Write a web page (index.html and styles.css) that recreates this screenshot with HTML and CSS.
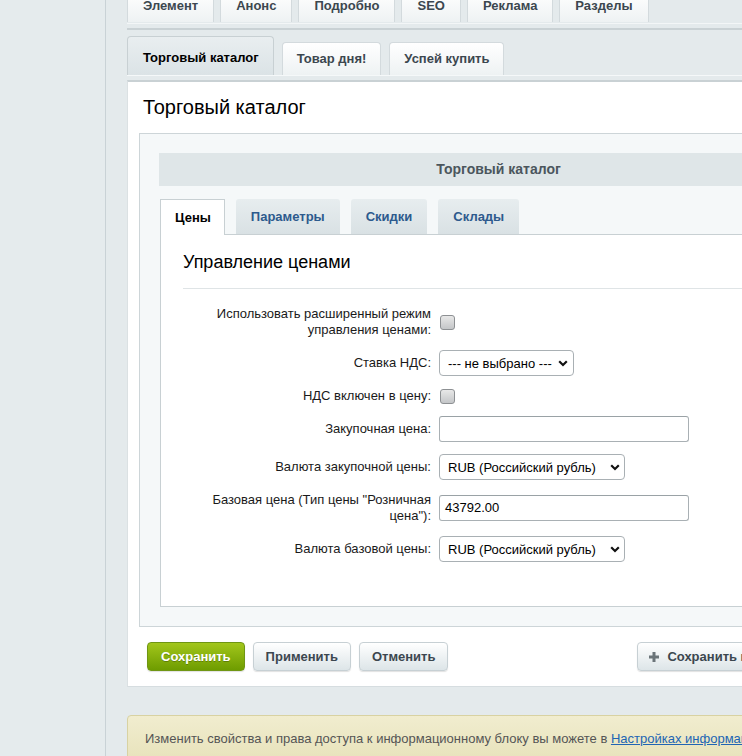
FILE: index.html
```html
<!DOCTYPE html>
<html lang="ru">
<head>
<meta charset="utf-8">
<title>Торговый каталог</title>
<link rel="stylesheet" href="styles.css">
</head>
<body>
<div class="page">
  <div class="side"></div>
  <div class="main">
    <div class="tabs1">
      <div class="tab1">Элемент</div>
      <div class="tab1">Анонс</div>
      <div class="tab1">Подробно</div>
      <div class="tab1">SEO</div>
      <div class="tab1">Реклама</div>
      <div class="tab1">Разделы</div>
    </div>
    <div class="tabs2">
      <div class="tab2 active">Торговый каталог</div>
      <div class="tab2">Товар дня!</div>
      <div class="tab2">Успей купить</div>
    </div>
    <div class="card">
      <h1 class="card-title">Торговый каталог</h1>
      <div class="inner">
        <div class="inner-head">Торговый каталог</div>
        <div class="subtabs">
          <div class="subtab active">Цены</div>
          <div class="subtab">Параметры</div>
          <div class="subtab">Скидки</div>
          <div class="subtab">Склады</div>
        </div>
        <div class="panel">
          <h2 class="panel-title">Управление ценами</h2>
          <div class="sep"></div>
          <div class="form">
            <div class="lbl">Использовать расширенный режим управления ценами:</div>
            <div class="ctl"><span class="cb"></span></div>

            <div class="lbl">Ставка НДС:</div>
            <div class="ctl"><div class="sel sel-sm"><span>--- не выбрано ---</span><svg class="chev" width="10" height="7" viewBox="0 0 10 7"><path d="M1.2 1.3 L5 5 L8.8 1.3" fill="none" stroke="#111" stroke-width="2.2"/></svg></div></div>

            <div class="lbl">НДС включен в цену:</div>
            <div class="ctl"><span class="cb"></span></div>

            <div class="lbl">Закупочная цена:</div>
            <div class="ctl"><div class="inp"></div></div>

            <div class="lbl">Валюта закупочной цены:</div>
            <div class="ctl"><div class="sel"><span>RUB (Российский рубль)</span><svg class="chev" width="10" height="7" viewBox="0 0 10 7"><path d="M1.2 1.3 L5 5 L8.8 1.3" fill="none" stroke="#111" stroke-width="2.2"/></svg></div></div>

            <div class="lbl">Базовая цена (Тип цены "Розничная цена"):</div>
            <div class="ctl"><div class="inp">43792.00</div></div>

            <div class="lbl">Валюта базовой цены:</div>
            <div class="ctl"><div class="sel"><span>RUB (Российский рубль)</span><svg class="chev" width="10" height="7" viewBox="0 0 10 7"><path d="M1.2 1.3 L5 5 L8.8 1.3" fill="none" stroke="#111" stroke-width="2.2"/></svg></div></div>
          </div>
        </div>
      </div>
      <div class="buttons">
        <div class="btn btn-green">Сохранить</div>
        <div class="btn">Применить</div>
        <div class="btn">Отменить</div>
        <div class="btn btn-add"><svg width="12" height="12" viewBox="0 0 12 12"><path d="M6 1 V11 M1 6 H11" stroke="#6b7479" stroke-width="3"/></svg>Сохранить и добавить</div>
      </div>
    </div>
    <div class="note">Изменить свойства и права доступа к информационному блоку вы можете в <a href="#">Настройках информационного блока</a>.</div>
  </div>
</div>
</body>
</html>
```

FILE: styles.css
```css
html, body {
  margin: 0;
  padding: 0;
}
body {
  width: 742px;
  height: 756px;
  overflow: hidden;
  background: #e4eaec;
  font-family: "Liberation Sans", Arial, sans-serif;
  font-size: 13px;
  color: #000;
}
.page {
  display: flex;
  align-items: flex-start;
  width: 1000px;
}
.side {
  width: 105px;
  height: 756px;
  flex: none;
  border-right: 1px solid #c9d2d6;
  background: #e5ebed;
}
.main {
  flex: none;
  width: 743px;
  padding-left: 21px;
}

/* top tab row */
.tabs1 {
  display: flex;
  gap: 6px;
  height: 23px;
  align-items: flex-end;
  border-bottom: 1px solid #f3f6f7;
}
.tab1 {
  height: 31px;
  margin-bottom: 1px;
  padding: 0 15px 9px 15px;
  line-height: 14px;
  display: flex;
  align-items: flex-end;
  box-sizing: border-box;
  font-weight: bold;
  color: #3c474f;
  background: linear-gradient(#ffffff, #eef2f3);
  border: 1px solid #d3dadd;
  border-bottom: none;
}

/* second tab row */
.tabs2 {
  margin-top: 4px;
  border-top: 2px solid #c9d1d4;
  padding-top: 6px;
  display: flex;
  align-items: flex-end;
  gap: 8px;
  border-bottom: 1px solid #f5f8f9;
}
.tab2 {
  height: 33px;
  box-sizing: border-box;
  padding: 0 14px;
  line-height: 31px;
  font-weight: bold;
  color: #3c474f;
  background: linear-gradient(#ffffff, #eef2f3);
  border: 1px solid #d3dadd;
  border-bottom: none;
  border-radius: 4px 4px 0 0;
}
.tab2.active {
  height: 39px;
  line-height: 41px;
  padding: 0 14px 0 15px;
  color: #000;
  background: linear-gradient(#e9eef0, #dbe3e6);
  border-color: #c8d0d3;
}

/* white card */
.card {
  margin-top: 4px;
  background: #fff;
  border-top: 2px solid #c9d1d4;
  border-left: 1px solid #dbe1e3;
  border-bottom: 1px solid #d6dde0;
  padding: 13px 0 15px 0;
  box-sizing: border-box;
}
.card-title {
  margin: 0 0 14px 15px;
  font-size: 20px;
  line-height: 24px;
  font-weight: normal;
  color: #000;
}
.inner {
  margin: 0 12px 0 11px;
  padding: 19px;
  background: #f5f8f9;
  border: 1px solid #cdd5d8;
}
.inner-head {
  height: 33px;
  line-height: 33px;
  text-align: center;
  font-size: 14px;
  font-weight: bold;
  color: #4b565d;
  background: #dfe6e8;
}
.subtabs {
  margin-top: 13px;
  padding-left: 1px;
  display: flex;
  gap: 11px;
  align-items: flex-start;
  position: relative;
  z-index: 1;
}
.subtab {
  height: 35px;
  line-height: 36px;
  padding: 0 15px;
  font-weight: bold;
  color: #2d5a8d;
  background: linear-gradient(#e7edef, #d9e1e4);
  border-radius: 3px 3px 0 0;
  box-sizing: border-box;
}
.subtab.active {
  height: 36px;
  color: #000;
  background: #fff;
  border: 1px solid #c8d0d3;
  border-bottom: none;
  border-radius: 0;
  line-height: 35px;
  padding: 0 13px 0 14px;
}
.panel {
  margin-left: 1px;
  margin-top: -1px;
  background: #fff;
  border: 1px solid #c8d0d3;
  padding: 16px 0 44px 22px;
}
.panel-title {
  margin: 0;
  font-size: 18px;
  line-height: 22px;
  font-weight: normal;
  color: #000;
}
.sep {
  margin-top: 15px;
  height: 1px;
  background: #dfe4e6;
}
.form {
  margin-top: 17px;
  display: grid;
  grid-template-columns: 248px 1fr;
  column-gap: 8px;
  row-gap: 12px;
  align-items: center;
}
.lbl {
  text-align: right;
  line-height: 16px;
  color: #1a1a1a;
}
.ctl {
  display: flex;
  align-items: center;
  min-height: 16px;
}
.cb {
  width: 13px;
  height: 13px;
  border: 1px solid #8d9093;
  border-radius: 3px;
  background: linear-gradient(#e8e8e8, #c4c6c8);
  margin-left: 1px;
}
.sel {
  width: 186px;
  height: 26px;
  box-sizing: border-box;
  border: 1px solid #a9b0b4;
  border-radius: 4px;
  background: #fff;
  padding: 0 4px 0 8px;
  display: flex;
  align-items: center;
  justify-content: space-between;
  color: #000;
}
.sel-sm {
  width: 135px;
  padding-right: 5px;
}
.chev {
  flex: none;
}
.inp {
  width: 250px;
  height: 26px;
  box-sizing: border-box;
  border: 1px solid #a9b0b4;
  border-top-color: #9aa2a6;
  border-radius: 3px;
  background: #fff;
  padding: 0 5px;
  line-height: 24px;
  color: #000;
}

/* buttons */
.buttons {
  margin-top: 15px;
  padding: 0 44px 0 19px;
  display: flex;
  gap: 8px;
}
.btn {
  height: 29px;
  box-sizing: border-box;
  padding: 0 12px;
  line-height: 27px;
  font-weight: bold;
  color: #3c474f;
  background: linear-gradient(#ffffff, #dde5e8);
  border: 1px solid #c7d0d4;
  border-radius: 4px;
  box-shadow: 0 1px 1px rgba(0,0,0,0.12);
}
.btn-green {
  padding: 0 13px;
  color: #fff;
  text-shadow: 0 1px 0 rgba(0,0,0,0.25);
  background: linear-gradient(#a2c61b, #6e9c00);
  border-color: #6f9613;
}
.btn-add {
  margin-left: auto;
  display: flex;
  align-items: center;
  gap: 7px;
  padding: 0 11px 0 10px;
}

/* note */
.note {
  margin-top: 28px;
  border: 1px solid #d8d2a2;
  border-radius: 4px;
  background: linear-gradient(#f1edcf, #e7e2ba);
  padding: 15px 17px;
  line-height: 16px;
  color: #555;
  white-space: nowrap;
}
.note a {
  color: #2165b4;
  text-decoration: underline;
}
```
